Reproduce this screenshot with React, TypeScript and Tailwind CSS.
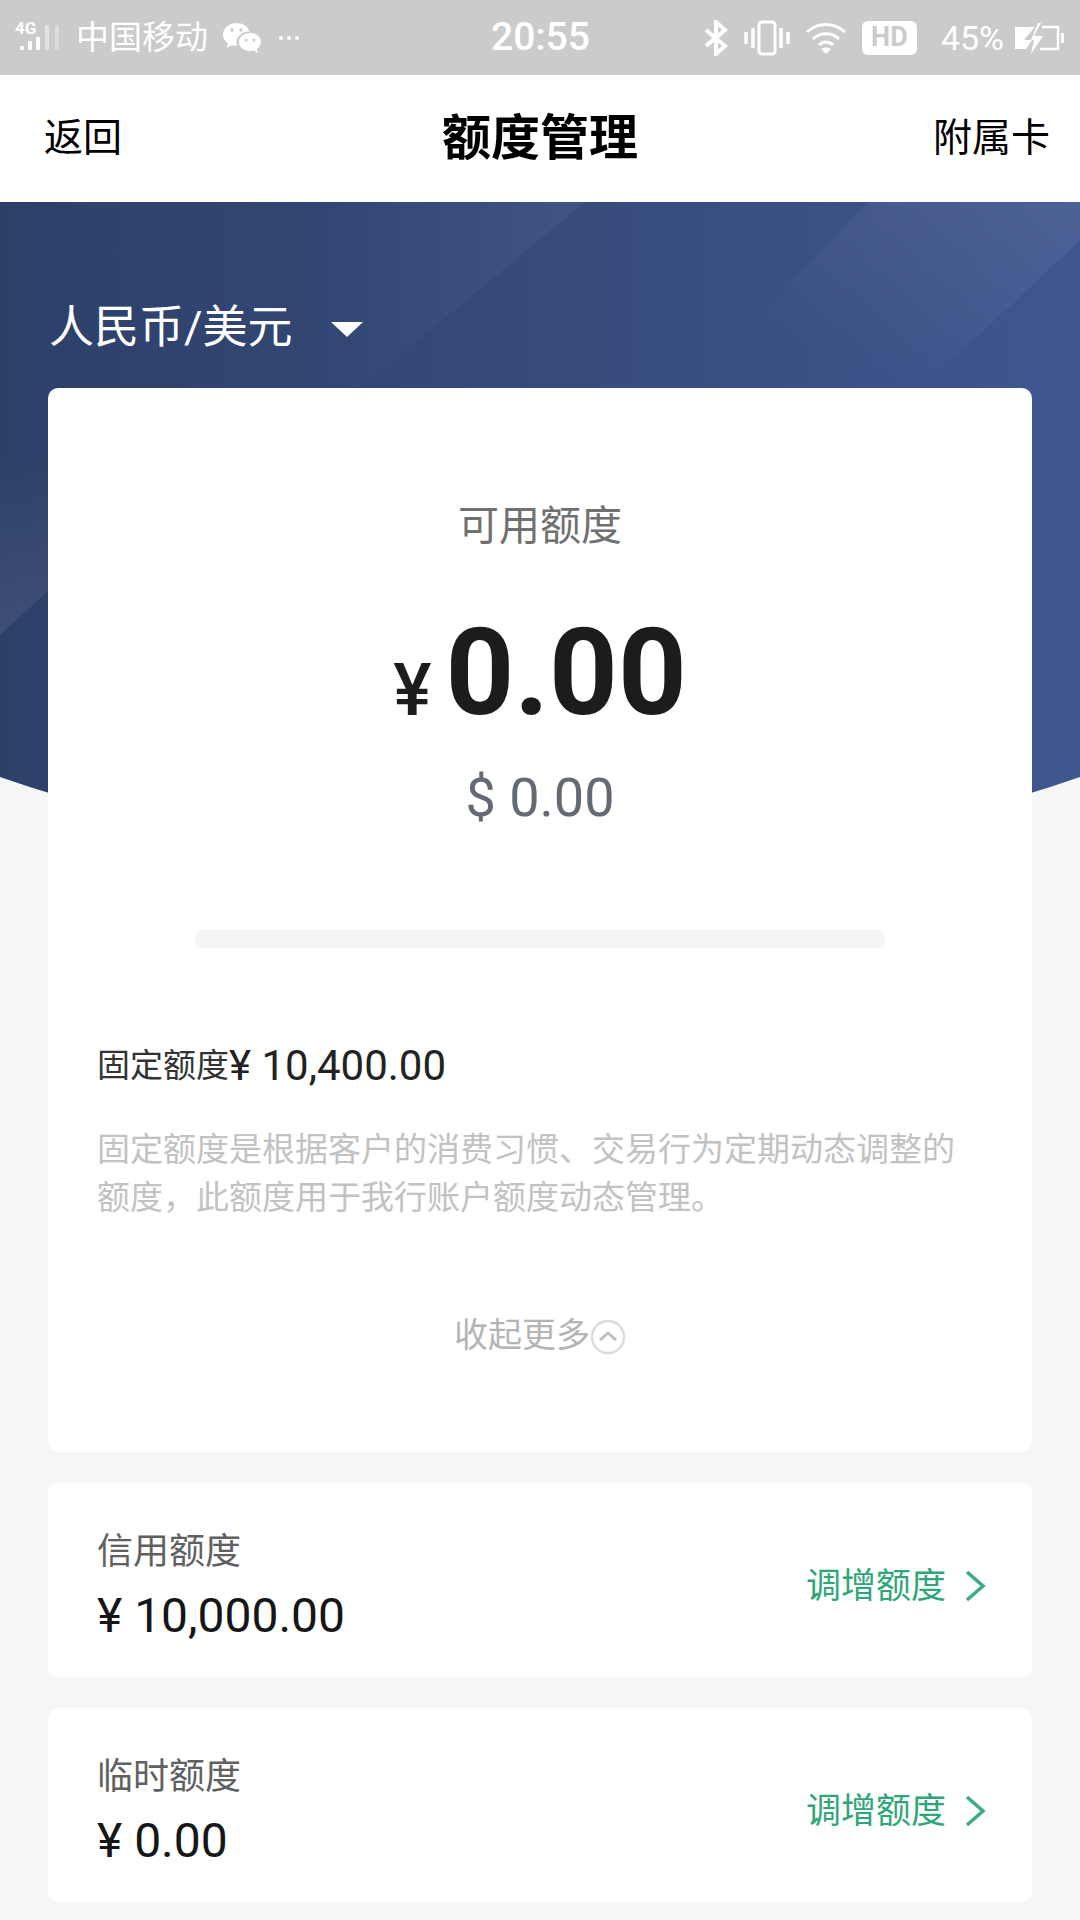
const cjk = "font-['Roboto','Noto_Sans_CJK_SC',sans-serif]"

function StatusBar() {
  return (
    <div className="flex h-[75px] items-center bg-[#cbcbcb] pl-[15px] pr-[14px] text-white">
      <div className="flex w-[400px] items-center">
        <svg width="46" height="46" viewBox="0 0 46 46" fill="white" aria-hidden>
          <text x="0" y="19" fontSize="17" fontWeight="700" fontFamily="Roboto">4G</text>
          <rect x="5" y="31" width="4" height="4" />
          <rect x="13" y="26" width="4" height="9" />
          <rect x="21" y="22" width="4" height="13" />
          <rect x="30" y="10" width="4" height="25" opacity="0.45" />
          <rect x="40" y="10" width="4" height="25" opacity="0.3" />
        </svg>
        <span className="ml-[15px] text-[33px] leading-none">中国移动</span>
        <svg className="ml-[14px]" width="40" height="34" viewBox="0 0 40 34" fill="white" aria-hidden>
          <path d="M15 2C7 2 1 7 1 13.500c0 3.600 2 6.800 5 8.900L4.500 27l5.400-2.800c1.600.5 3.300.7 5.100.7-.4-1.200-.6-2.400-.6-3.500 0-6.300 5.800-11 13-11-1.300-4.900-6.800-8.400-13-8.400z" />
          <path d="M39 21c0-5.300-5.200-9-11-9s-11 3.700-11 9 5.200 9 11 9c1.300 0 2.500-.2 3.700-.5l4.300 2.500-1.200-4c2.500-1.700 4.200-4.400 4.200-7z" />
          <circle cx="10" cy="9" r="1.700" fill="#cbcbcb" />
          <circle cx="19" cy="9" r="1.700" fill="#cbcbcb" />
          <circle cx="24" cy="19" r="1.500" fill="#cbcbcb" />
          <circle cx="32" cy="19" r="1.500" fill="#cbcbcb" />
        </svg>
        <div className="ml-[17px] flex gap-[4px]">
          <span className="h-[4px] w-[4px] rounded-full bg-white" />
          <span className="h-[4px] w-[4px] rounded-full bg-white" />
          <span className="h-[4px] w-[4px] rounded-full bg-white" />
        </div>
      </div>
      <span className="ml-[76px] text-[39px] font-medium leading-none">20:55</span>
      <div className="ml-auto flex items-center">
        <svg width="24" height="36" viewBox="0 0 24 36" fill="none" stroke="white" strokeWidth="4" aria-hidden>
          <path d="M2 10l19 16-9 8V2l9 8L2 26" />
        </svg>
        <svg className="ml-[16px]" width="46" height="36" viewBox="0 0 46 36" fill="none" stroke="white" aria-hidden>
          <path d="M2 12v12M9 8v20M37 8v20M44 12v12" strokeWidth="3.500" />
          <rect x="15" y="2" width="16" height="32" rx="3" strokeWidth="3" />
        </svg>
        <svg className="ml-[15px]" width="42" height="34" viewBox="0 0 42 34" fill="none" stroke="white" strokeWidth="3" aria-hidden>
          <path d="M2 11c11-10 27-10 38 0M8 18c7-7 19-7 26 0M14 24c4-4 10-4 14 0" />
          <path d="M21 33l-5-5c3-2 7-2 10 0z" fill="white" stroke="none" />
        </svg>
        <span className="ml-[15px] flex h-[34px] w-[55px] items-center justify-center rounded-[6px] bg-white text-[27px] font-bold leading-none text-[#cbcbcb]">
          HD
        </span>
        <span className="ml-[24px] text-[34px] leading-none">45%</span>
        <svg className="ml-[10px]" width="52" height="34" viewBox="0 0 52 34" fill="white" aria-hidden>
          <path d="M1 6h20L10 19h8l-6 9H1z" />
          <path d="M24 2h3l-7 13h9L17 33l3-14h-3z" />
          <path d="M28 6h16v22H26" fill="none" stroke="white" strokeWidth="2.500" />
          <rect x="47" y="12" width="3" height="10" />
        </svg>
      </div>
    </div>
  )
}

function NavBar() {
  return (
    <div className="flex h-[127px] items-center justify-between bg-white px-[30px] text-black">
      <span className="w-[250px] pl-[14px] text-[39px] leading-none">返回</span>
      <h1 className="text-[49px] font-bold leading-none">额度管理</h1>
      <span className="w-[250px] text-right text-[39px] leading-none">附属卡</span>
    </div>
  )
}

function Banner() {
  return (
    <div className="h-[670px] bg-gradient-to-r from-[#2d4068] to-[#40568f] [clip-path:circle(1646px_at_540px_-980px)]">
      <svg className="block" width="1080" height="670" viewBox="0 0 1080 670" aria-hidden>
        <defs>
          <linearGradient id="fadeA" x1="0" y1="0" x2="1" y2="0">
            <stop offset="0" stopColor="white" stopOpacity="0" />
            <stop offset="1" stopColor="white" stopOpacity="0.05" />
          </linearGradient>
          <linearGradient id="fadeB" x1="0" y1="1" x2="1" y2="0">
            <stop offset="0.25" stopColor="white" stopOpacity="0" />
            <stop offset="1" stopColor="white" stopOpacity="0.07" />
          </linearGradient>
          <linearGradient id="fadeC" x1="0" y1="0" x2="0" y2="1">
            <stop offset="0" stopColor="white" stopOpacity="0" />
            <stop offset="1" stopColor="white" stopOpacity="0.08" />
          </linearGradient>
        </defs>
        <polygon points="330,0 585,0 440,120 360,186 330,186" fill="url(#fadeA)" />
        <polygon points="868,0 1080,0 1080,38 923,186 690,186" fill="url(#fadeB)" />
        <polygon points="0,250 48,250 48,389 0,433" fill="url(#fadeC)" />
      </svg>
    </div>
  )
}

function LimitRow({ title, amount }: { title: string; amount: string }) {
  return (
    <div className="flex h-[194px] items-center justify-between rounded-[10px] bg-white pl-[49px] pr-[46px] pt-[12px]">
      <div>
        <div className="text-[36px] leading-[46px] text-[#606060]">{title}</div>
        <div className="mt-[14px] text-[48px] leading-[54px] text-[#161616]">{amount}</div>
      </div>
      <div className="flex items-center text-[35px] leading-none text-[#2fa678]">
        调增额度
        <svg className="ml-[18px]" width="22" height="34" viewBox="0 0 22 34" fill="none" stroke="#3cab80" strokeWidth="3.500" aria-hidden>
          <path d="M3 3l16 14L3 31" />
        </svg>
      </div>
    </div>
  )
}

export default function App() {
  return (
    <div className={`h-[1920px] w-[1080px] overflow-hidden bg-[#f6f6f6] ${cjk}`}>
      <StatusBar />
      <NavBar />
      <Banner />
      <div className="relative mt-[-578px] h-[94px] pl-[49px] text-white">
        <div className="flex items-center text-[45px] leading-[68px]">
          人民币/美元
          <span className="ml-[38px] mt-[2px] h-0 w-0 border-x-[16px] border-t-[15px] border-x-transparent border-t-white" />
        </div>
      </div>
      <div className="relative mx-[48px] flex flex-col gap-[31px]">
        <div className="h-[1064px] rounded-[10px] bg-white pt-[114px]">
          <div className="text-center text-[41px] leading-[48px] text-[#707070]">可用额度</div>
          <div className="mt-[62px] flex h-[122px] items-center justify-center text-[#1c1c1c]">
            <span className="mr-[14px] mt-[36px] text-[72px] font-medium leading-none">¥</span>
            <span className="text-[120px] font-bold leading-none">0.00</span>
          </div>
          <div className="mt-[32px] text-center text-[54px] leading-[64px] text-[#646a73]">$ 0.00</div>
          <div className="mx-[147px] mt-[100px] h-[18px] rounded-[8px] bg-[#f5f5f5]" />
          <div className="ml-[49px] mt-[94px] flex items-center text-[#333]">
            <span className="text-[33px] leading-[48px]">固定额度</span>
            <span className="text-[42px] leading-[48px] text-[#222]">¥ 10,400.00</span>
          </div>
          <p className="mx-[49px] mt-[36px] text-[33px] leading-[48px] text-[#c2c2c2]">
            固定额度是根据客户的消费习惯、交易行为定期动态调整的额度，此额度用于我行账户额度动态管理。
          </p>
          <div className="mt-[91px] flex items-center justify-center text-[34px] leading-[44px] text-[#b4b4b4]">
            收起更多
            <svg width="36" height="36" viewBox="0 0 36 36" fill="none" stroke="#dcdcdc" strokeWidth="2.500" className="mt-[4px]" aria-hidden>
              <circle cx="18" cy="18" r="16" />
              <path d="M10 21l8-7 8 7" stroke="#bdbdbd" />
            </svg>
          </div>
        </div>
        <LimitRow title="信用额度" amount="¥ 10,000.00" />
        <LimitRow title="临时额度" amount="¥ 0.00" />
      </div>
    </div>
  )
}
